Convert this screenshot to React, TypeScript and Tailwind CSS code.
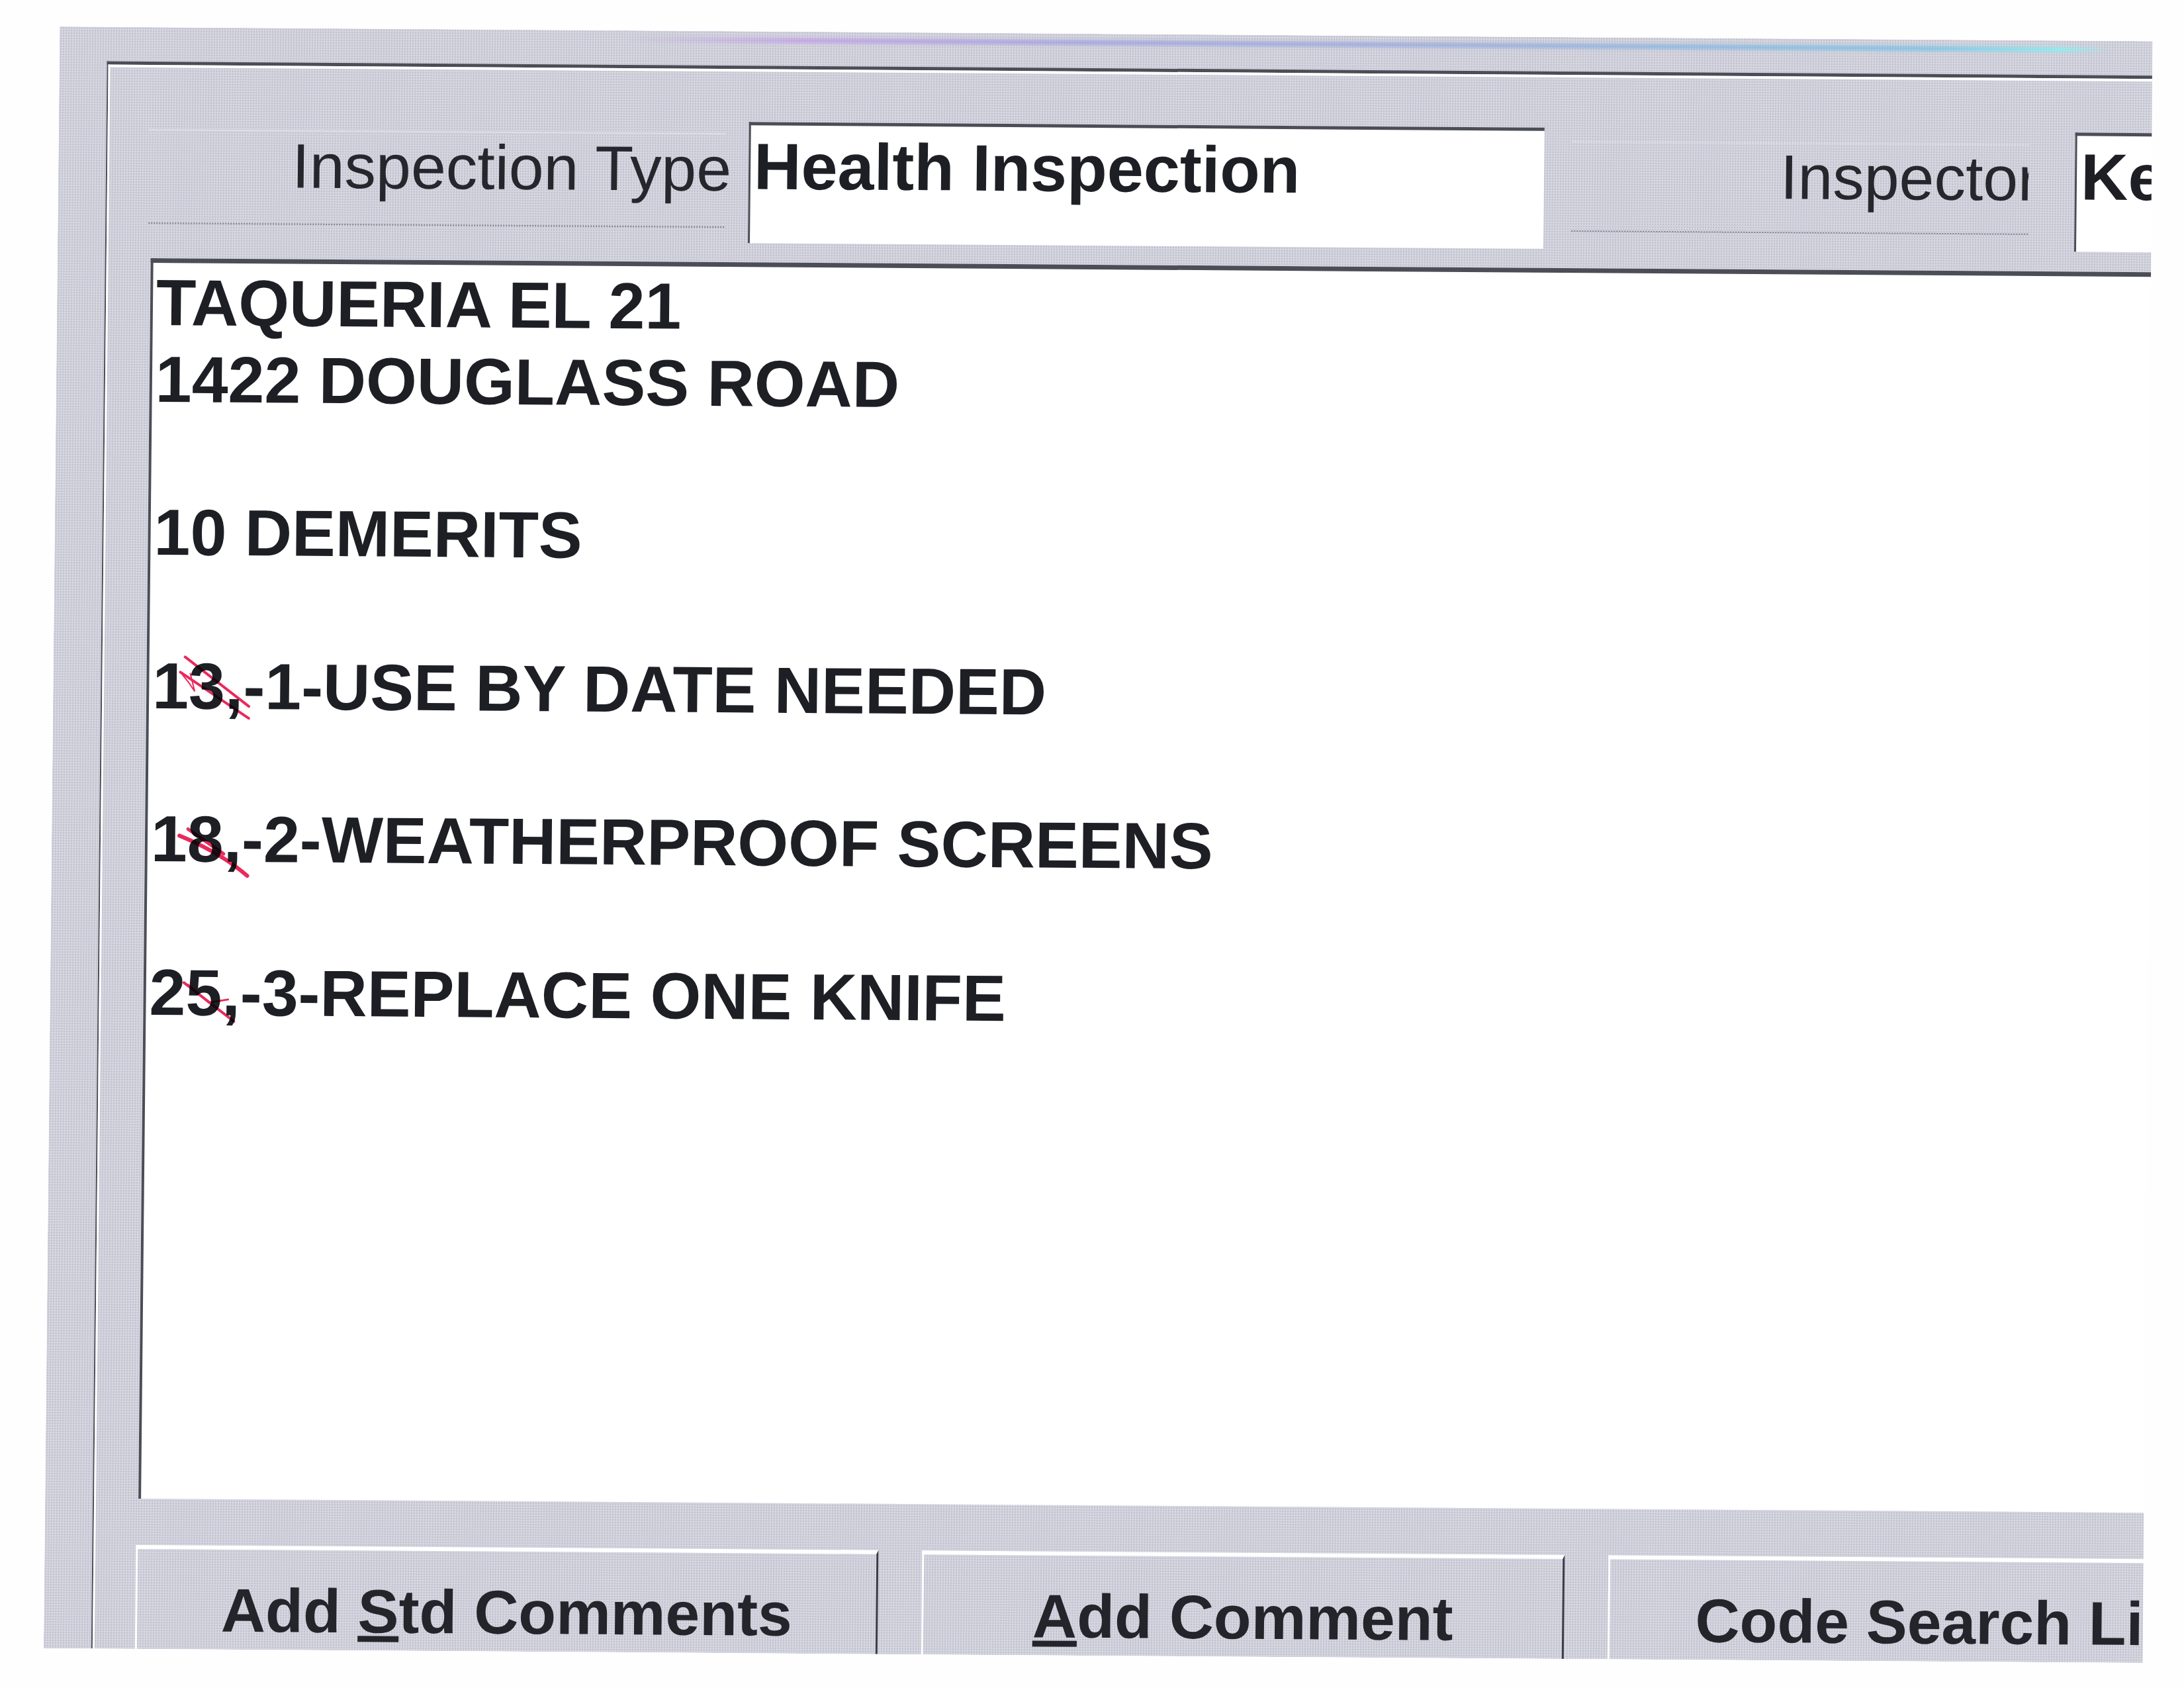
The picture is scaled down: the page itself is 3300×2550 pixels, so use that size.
import React from 'react';

const commentLines = [
  'TAQUERIA EL 21',
  '1422 DOUGLASS ROAD',
  '',
  '10 DEMERITS',
  '',
  '13,-1-USE BY DATE NEEDED',
  '',
  '18,-2-WEATHERPROOF SCREENS',
  '',
  '25,-3-REPLACE ONE KNIFE',
];

const RedStrikes: React.FC = () => (
  <svg className="absolute left-0 top-0 mix-blend-multiply" width="300" height="1300" fill="none" stroke="#e92a5c" strokeLinecap="round">
    <path d="M54 595 L151 669" strokeWidth="4" />
    <path d="M47 618 L151 687" strokeWidth="4" />
    <path d="M47 618 L60 634 L69 647 L62 620" strokeWidth="2" />
    <path d="M48 865 Q110 890 151 925" strokeWidth="6" />
    <path d="M61 855 L115 892" strokeWidth="5" />
    <path d="M57 1087 L133 1145" strokeWidth="4" />
    <path d="M63 1090 L95 1117 L124 1112" strokeWidth="3" />
  </svg>
);

const ActionButton: React.FC<{ width: string; children: React.ReactNode }> = ({ width, children }) => (
  <button
    type="button"
    className={`${width} h-[200px] shrink-0 border-t-[6px] border-l-[3px] border-r-[3px] border-t-white border-l-white border-r-[#3b3d45] pt-[46px] flex justify-center text-[93px] leading-[93px] font-bold text-[#23252b]`}
  >
    <span>{children}</span>
  </button>
);

export default function App() {
  return (
    <div className="w-[3300px] h-[2550px] overflow-hidden bg-[#fefefe] font-['Liberation_Sans',Arial,sans-serif]">
      <div className="w-full h-full pl-[78px] pt-[51px] rotate-[0.4deg] skew-x-[-0.17deg]">
        <div className="w-[3172px] h-[2450px] overflow-hidden [clip-path:polygon(0_0,3162px_0,100%_100%,0_100%)] bg-[#d5d6e0] bg-[radial-gradient(circle,#bebfcb_1px,transparent_1.3px)] bg-[length:4px_4px]">
          {/* scanner colour streak along the top */}
          <div className="ml-[850px] mt-[10px] h-[7px] w-[2245px] blur-[2px] bg-[linear-gradient(to_right,transparent,#c4a5e6_12%,#a9a8df_30%,#9fb3dc_60%,#86c5e4_88%,#8fecee_97%,transparent)]" />

          <div className="ml-[72px] mt-[35px] w-[3200px] border-t-[5px] border-l-[2px] border-[#4b4d57]">
            <div className="border-t-[4px] border-l-[3px] border-white pt-[76px]">
              <div className="flex items-start">
                <div className="ml-[60px] mt-[17px] w-[870px] h-[143px] shrink-0 border-y-2 border-dotted border-t-[#e8e9f0] border-b-[#7d7f8a] flex justify-end">
                  <span className="pt-[5px] -mr-[10px] whitespace-nowrap text-[95px] leading-[94px] text-[#25272d]">Inspection Type</span>
                </div>
                <div className="ml-[36px] w-[1202px] h-[183px] shrink-0 bg-white border-t-[5px] border-l-[3px] border-[#4b4d57] pl-[5px] pt-[14px] text-[99px] leading-[96px] font-bold text-[#1d1f24]">
                  Health Inspection
                </div>
                <div className="ml-[42px] mt-[20px] w-[690px] h-[137px] shrink-0 overflow-hidden border-y-2 border-dotted border-t-[#e8e9f0] border-b-[#7d7f8a] pl-[315px]">
                  <span className="block pt-[3px] whitespace-nowrap text-[95px] leading-[94px] text-[#25272d]">Inspector</span>
                </div>
                <div className="ml-[70px] mt-[2px] w-[400px] h-[180px] shrink-0 bg-white border-t-[5px] border-l-[3px] border-[#4b4d57] pl-[6px] pt-[14px] text-[99px] leading-[96px] font-bold text-[#1d1f24]">
                  Ke
                </div>
              </div>

              <div className="relative ml-[64px] mt-[29px] w-[3100px] h-[1874px] bg-white border-t-[7px] border-l-[4px] border-[#4b4d57] pl-[5px] pt-[3px] text-[98.7px] leading-[115.75px] font-bold text-[#1d1f24]">
                {commentLines.map((line, i) => (
                  <div key={i} className="whitespace-pre">{line || ' '}</div>
                ))}
                <RedStrikes />
              </div>

              <div className="ml-[61px] mt-[70px] flex gap-[66px]">
                <ActionButton width="w-[1122px]">
                  Add <span className="underline">S</span>td Comments
                </ActionButton>
                <ActionButton width="w-[971px]">
                  <span className="underline">A</span>dd Comment
                </ActionButton>
                <ActionButton width="w-[1024px]">Code Search List</ActionButton>
              </div>
            </div>
          </div>
        </div>
      </div>
    </div>
  );
}
